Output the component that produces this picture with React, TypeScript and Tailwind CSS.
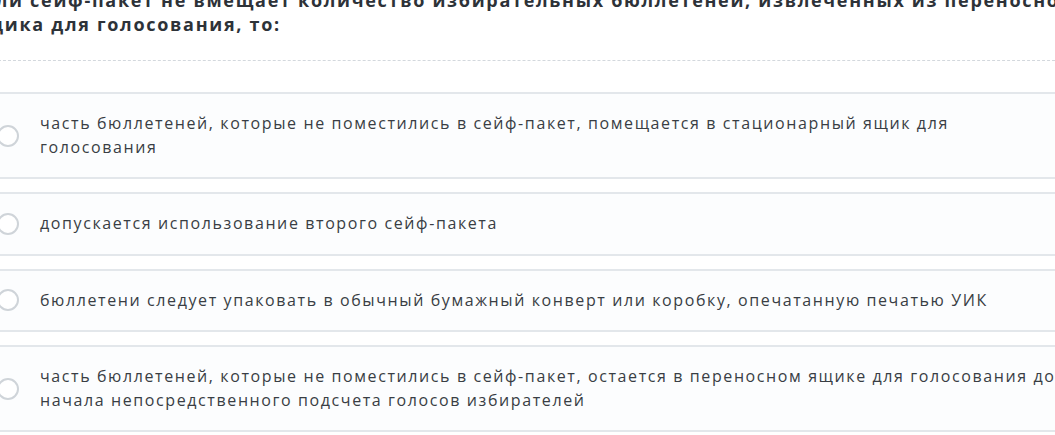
import React from 'react';

const answers = [
  'часть бюллетеней, которые не поместились в сейф-пакет, помещается в стационарный ящик для голосования',
  'допускается использование второго сейф-пакета',
  'бюллетени следует упаковать в обычный бумажный конверт или коробку, опечатанную печатью УИК',
  'часть бюллетеней, которые не поместились в сейф-пакет, остается в переносном ящике для голосования до начала непосредственного подсчета голосов избирателей',
];

function AnswerOption({ text }: { text: string }) {
  return (
    <label className="flex cursor-pointer items-center gap-[21px] border-y-2 border-[#e3e7eb] bg-[#fcfdfe] py-[18px] pl-[19px] pr-[30px]">
      <input type="radio" name="answer" className="peer sr-only" />
      <span className="h-[22px] w-[22px] shrink-0 rounded-full border-2 border-[#cfd4d9] bg-white" />
      <span className="text-[16px] leading-[23.5px] tracking-[1.6px] text-[#393e44]">{text}</span>
    </label>
  );
}

export default function App() {
  return (
    <div className="h-[435px] w-[1055px] overflow-hidden bg-white font-['Open_Sans',sans-serif]">
      <div className="-ml-[22px] -mt-[12px] w-[1122px]">
        <h2 className="-ml-[5px] w-[1126px] text-[18px] font-bold leading-[24px] tracking-[1.7px] text-[#2d3238]">
          Если сейф-пакет не вмещает количество избирательных бюллетеней, извлеченных из переносного ящика для голосования, то:
        </h2>
        <div className="mt-[24px] border-t border-dashed border-[#d3d8dd]" />
        <div className="mt-[31px] flex flex-col gap-[13px]">
          {answers.map((a) => (
            <AnswerOption key={a} text={a} />
          ))}
        </div>
      </div>
    </div>
  );
}
